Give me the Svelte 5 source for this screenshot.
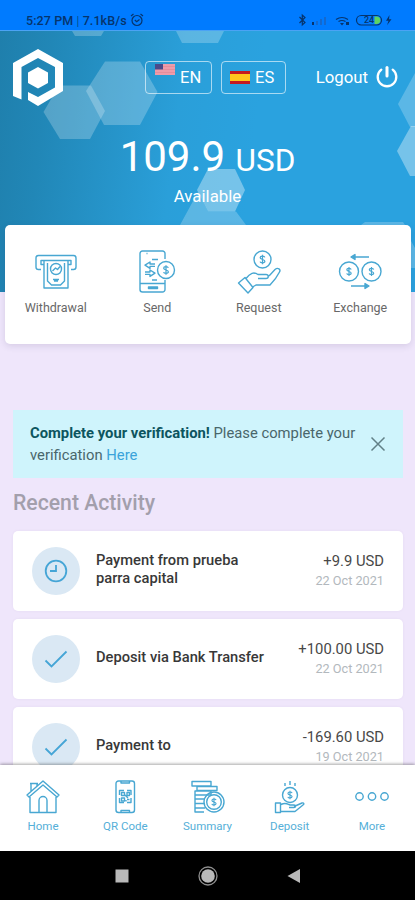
<svelte:options runes={true} />

<script>
	let showAlert = $state(true);
	let lang = $state('es');
	let tab = $state('home');

	const actions = [
		{ id: 'withdrawal', label: 'Withdrawal' },
		{ id: 'send', label: 'Send' },
		{ id: 'request', label: 'Request' },
		{ id: 'exchange', label: 'Exchange' }
	];

	const activity = [
		{ title: 'Payment from prueba parra capital', amount: '+9.9 USD', date: '22 Oct 2021', done: false },
		{ title: 'Deposit via Bank Transfer', amount: '+100.00 USD', date: '22 Oct 2021', done: true },
		{ title: 'Payment to', amount: '-169.60 USD', date: '19 Oct 2021', done: true }
	];

	const tabs = [
		{ id: 'home', label: 'Home' },
		{ id: 'qr', label: 'QR Code' },
		{ id: 'summary', label: 'Summary' },
		{ id: 'deposit', label: 'Deposit' },
		{ id: 'more', label: 'More' }
	];
</script>

{#snippet coin(cx, cy, r, s)}
	<circle {cx} {cy} {r} />
	<g transform="translate({cx} {cy}) scale({s})">
		<path d="M2.6 -2.4C2 -4.2 -2.6 -4.2 -2.6 -2C-2.6 .3 2.6 -.3 2.6 2C2.6 4.2 -2.2 4.2 -2.7 2.3M0 -5.2V5.2" />
	</g>
{/snippet}

<div class="phone">
	<div class="status">
		<span class="time">5:27 PM <i>|</i> 7.1kB/s</span>
		<svg class="alarm" width="14" height="14" viewBox="0 0 14 14">
			<circle cx="7" cy="7.5" r="5" />
			<path d="M1 3L3.5 1M13 3L10.500 1M4.800 7L6.700 8.800L9.500 6.500" />
		</svg>
		<svg class="signals" width="98" height="16" viewBox="0 0 98 16">
			<path class="line" d="M4.500 5L10 10.500L7.300 13V3L10 5.500L4.500 11" />
			<path d="M17 10h2v3h-2z" />
			<path class="dim" d="M21 9h2v4h-2zM25 7h2v6h-2zM29 5h2v8h-2z" />
			<path class="line" d="M41 7.500Q47 3.500 53 7.500M43.500 9.500Q47 7.500 50.500 9.500" />
			<path d="M45 11h4l-2 2.500zM51 10h3v3h-3z" />
			<rect class="line" x="61.500" y="3.500" width="25" height="9.500" rx="4.700" />
			<path class="charge" d="M79.500 4.500h2a3.700 3.700 0 0 1 0 7.500h-2z" />
			<text x="69" y="11.300">24</text>
			<path d="M94.500 3L91 8.700h2.500L92 13.200L96.500 7.200H94z" />
		</svg>
	</div>

	<main>
		<header class="hero">
			<svg class="hexes" width="415" height="261" viewBox="0 31 415 261">
				<path d="M43.500 112L59 85.500H91L105 111L90 139H60Z" />
				<path d="M86 91L105 61.500H140L157.500 92L140 125H104Z" />
				<path d="M72 31H104L101 36H75Z" />
				<path d="M176 31H224L218 43H182Z" />
				<path d="M398 104L415 73V127H410Z" />
				<path class="light" d="M397 151L411 126H415V176H410Z" />
				<path class="light" d="M197 190L208 169H235L245 190L235 211.500H208Z" />
				<path d="M180 225L198 192L208 211.500H236L246 225Z" />
				<path d="M361 225L365 222H403L405 225ZM411 241L415 248V268H411Z" />
			</svg>
			<div class="top">
				<svg class="logo" width="50" height="57" viewBox="0 0 50 57">
					<path d="M0 47V14L25 0L50 14V42L25 57L15 51V43L25 48L42 38.500V18L25 9L8.500 18V50.500Z" />
					<path d="M25 18L35 23.500V34L25 39.500L15 34V23.500Z" />
				</svg>
				<div class="langs">
					<button class="lang en" onclick={() => (lang = 'en')}>
						<svg width="20" height="11" viewBox="0 0 20 11">
							<rect width="20" height="11" fill="#ee9ba9" />
							<path d="M8 2.500h12M8 5.500h12M0 8.500h20" stroke="#e48e9c" stroke-width="1" />
							<rect width="8" height="5.500" fill="#4a4a8a" />
						</svg>
						EN
					</button>
					<button class="lang es" onclick={() => (lang = 'es')}>
						<svg width="20" height="13" viewBox="0 0 20 13">
							<rect width="20" height="13" fill="#c41a20" />
							<rect y="3" width="20" height="7" fill="#ffc61e" />
						</svg>
						ES
					</button>
				</div>
				<button class="logout">
					Logout
					<svg width="22" height="22" viewBox="0 0 22 22">
						<path d="M5.300 3.600A9.300 9.300 0 1 0 16.700 3.600" stroke-width="2.300" />
						<path d="M11 1.500V10" stroke-width="3" />
					</svg>
				</button>
			</div>
			<div class="balance">109.9 <small>USD</small></div>
			<div class="available">Available</div>
		</header>

		<section class="actions">
			{#each actions as action}
				<button class="action">
					<svg class="icon" width="46" height="46" viewBox="0 0 46 46">
						{#if action.id === 'withdrawal'}
							<path d="M8 20.500H5.500a2.500 2.500 0 0 1-2.500-2.500V9a2.500 2.500 0 0 1 2.500-2.500h35a2.500 2.500 0 0 1 2.500 2.500v9a2.500 2.500 0 0 1-2.500 2.500H38" />
							<path d="M10.500 15.500H8v-4h30v4h-2.500M11 12v27h24V12M14.500 14v18l4 4h9l4-4V14" />
							<circle cx="23" cy="20" r="5.500" />
							<path d="M19.500 22l3-3 2 1.500 2.500-3M20 30.500h6M21 32h4" />
						{:else if action.id === 'send'}
							<path d="M31 10V4.500a2.500 2.500 0 0 0-2.500-2.500h-20A2.500 2.500 0 0 0 6 4.500v36A2.500 2.500 0 0 0 8.500 43h20a2.500 2.500 0 0 0 2.500-2.500V31M6 34.500h25M12.500 4.500h1M14.500 38h9v1.500h-9zM18 10.500h6M18 31h5" />
							<path d="M21 15h-5v-2l-5 3.200 5 3.200v-2h5M11 23h5v-2l5 3.200-5 3.200v-2h-5" />
							{@render coin(32, 21, 8.5, 0.9)}
						{:else if action.id === 'request'}
							{@render coin(26.5, 10.500, 8.5, 0.9)}
							<path d="M2.500 34L9 28.500L17 38.500L12 44Z" />
							<path d="M10 29.500C14 24 18 22.500 22 25.500H30C33 25.500 33 29.500 30 29.500H22M33 27L39 20.500C42 18 45 20.500 43.500 23C41 28 36 34 34 36H20L16.500 38" />
						{:else}
							{@render coin(12, 22.500, 9.5, 0.85)}
							{@render coin(34.500, 22.500, 9.5, 0.85)}
							<path d="M16 8h16M14 37h16" />
							<path class="solid" d="M18 5.500v5L14 8zM28 34.500v5l4-2.500z" />
						{/if}
					</svg>
					<span>{action.label}</span>
				</button>
			{/each}
		</section>

		{#if showAlert}
			<div class="alert">
				<p><b>Complete your verification!</b> Please complete your verification <a href="#verify">Here</a></p>
				<button class="close" aria-label="Close" onclick={() => (showAlert = false)}>
					<svg width="16" height="16" viewBox="0 0 16 16">
						<path d="M1.500 1.500L14.500 14.500M14.500 1.500L1.500 14.500" />
					</svg>
				</button>
			</div>
		{/if}

		<h2>Recent Activity</h2>
		<div class="list">
			{#each activity as item}
				<article class="item">
					<div class="badge">
						<svg width="24" height="24" viewBox="0 0 24 24">
							{#if item.done}
								<path d="M1.500 13.500L7.500 19.500L22.500 4.500" />
							{:else}
								<circle cx="12" cy="12" r="10.300" />
								<path d="M12 6V12H6" />
							{/if}
						</svg>
					</div>
					<h3>{item.title}</h3>
					<div class="amount">
						<div class="sum">{item.amount}</div>
						<div class="date">{item.date}</div>
					</div>
				</article>
			{/each}
		</div>
	</main>

	<nav>
		{#each tabs as t}
			<button class="tab" class:active={tab === t.id} onclick={() => (tab = t.id)}>
				<svg class="icon" width="36" height="34" viewBox="0 0 36 34">
					{#if t.id === 'home'}
						<path d="M5 17v15.500h26V17M18 1L2 15l2 2L18 5l14 12 2-2zM6 11V3.500h6V6M5 3.500h8M14 32V20.500a4 4 0 0 1 8 0V32" />
					{:else if t.id === 'qr'}
						<rect x="9" y="1" width="18.500" height="31.500" rx="2.500" />
						<path d="M14 1v2h8.500V1M14 32.500v-2h8.500v2M12.500 15v-4.500H17M20 10.500h4V15M24 18v4.500h-4M17 22.500h-4.500V18" />
						<path d="M14.500 12.500h3v3h-3zM20 12.500h2.500v3H20zM14.500 18h3v3h-3zM18 15l3 3M20 19.500h2.500M19 20v1.500" />
					{:else if t.id === 'summary'}
						<path d="M3 1.500h19V6H3zM8 6.500h20v4H8zM6 11h16v4H6zM15 32H6V15M6 19h10M6 23.500h9M6 28h10" />
						<circle cx="25" cy="22" r="10" />
						{@render coin(25, 22, 7.3, 0.8)}
					{:else if t.id === 'deposit'}
						{@render coin(18, 15, 7.5, 0.8)}
						<path d="M18 1v4M13 3v3M23 3v3M3.500 23h5v9.500h-5zM9 24.500c5-2.500 7 0 9 .5h4c2 0 2 2.500 0 2.500h-5M22 26.500l8-3.500c2-.5 2.500 1 1 2l-8 6.500H9" />
					{:else}
						<circle cx="5.500" cy="16.500" r="3.700" />
						<circle cx="18" cy="16.500" r="3.700" />
						<circle cx="30.500" cy="16.500" r="3.700" />
					{/if}
				</svg>
				<span>{t.label}</span>
			</button>
		{/each}
	</nav>

	<div class="system">
		<svg width="14" height="14" viewBox="0 0 14 14"><rect x=".5" y=".5" width="13" height="13" /></svg>
		<svg width="20" height="20" viewBox="0 0 20 20">
			<circle cx="10" cy="10" r="6.800" />
			<circle class="ring" cx="10" cy="10" r="9" />
		</svg>
		<svg width="14" height="14" viewBox="0 0 14 14"><path d="M13 0V14L.5 7Z" /></svg>
	</div>
</div>

<style>
	:global(body) {
		margin: 0;
		background: #efe6fb;
	}
	.phone {
		width: 415px;
		height: 900px;
		display: flex;
		flex-direction: column;
		overflow: hidden;
		font-family: Roboto, sans-serif;
		background: #efe6fb;
	}
	button {
		font: inherit;
		color: inherit;
		background: none;
		border: 0;
		padding: 0;
	}
	svg {
		display: block;
		flex: none;
	}
	.status {
		height: 31px;
		flex: none;
		box-sizing: border-box;
		padding: 10px 22px 0 26px;
		display: flex;
		align-items: center;
		background: #007bff;
		color: #06346c;
		border-bottom: 1px solid #4ba3f5;
	}
	.time {
		font-size: 12.5px;
		font-weight: 500;
		letter-spacing: 0.1px;
		white-space: nowrap;
	}
	.time i {
		font-style: normal;
		font-weight: 300;
	}
	.alarm {
		margin-left: 3px;
		fill: none;
		stroke: #06346c;
		stroke-width: 1.2;
	}
	.signals {
		margin-left: auto;
		fill: #06346c;
	}
	.signals .line {
		fill: none;
		stroke: #06346c;
		stroke-width: 1.2;
	}
	.signals .dim {
		fill: #1369cf;
	}
	.signals .charge {
		fill: #5fd35f;
	}
	.signals text {
		font-size: 9px;
		font-weight: 500;
	}
	main {
		flex: 1;
		min-height: 0;
		overflow: hidden;
	}
	.hero {
		position: relative;
		height: 261px;
		color: #fff;
		background: linear-gradient(97deg, #1f7fac 0%, #2187b7 12%, #2a9fd9 42%, #2aa2df 60%, #2aa2df 100%);
	}
	.hexes {
		position: absolute;
		top: 0;
		left: 0;
		fill: rgba(255, 255, 255, 0.23);
	}
	.hexes .light {
		fill: rgba(255, 255, 255, 0.36);
	}
	.top {
		position: relative;
		display: flex;
		align-items: center;
		height: 58px;
		padding: 17px 17px 0 13px;
	}
	.logo {
		fill: #fff;
	}
	.langs {
		display: flex;
		gap: 9px;
		margin-left: 82px;
	}
	.lang {
		display: flex;
		align-items: center;
		box-sizing: border-box;
		height: 33px;
		gap: 5px;
		padding: 0 9px;
		border: 1px solid rgba(255, 255, 255, 0.6);
		border-radius: 4px;
		font-size: 16.5px;
	}
	.en {
		width: 67px;
	}
	.en svg {
		margin-bottom: 16px;
	}
	.es {
		width: 65px;
	}
	.es svg {
		margin-left: -1px;
	}
	.logout {
		display: flex;
		align-items: center;
		gap: 8px;
		margin-left: auto;
		font-size: 16.8px;
	}
	.logout svg {
		fill: none;
		stroke: #fff;
		stroke-linecap: round;
	}
	.balance {
		position: relative;
		margin-top: 26px;
		height: 50px;
		line-height: 50px;
		text-align: center;
		font-size: 42px;
	}
	.balance small {
		font-size: 31.5px;
	}
	.available {
		position: relative;
		margin-top: 2px;
		line-height: 24px;
		text-align: center;
		font-size: 16.8px;
	}
	.actions {
		position: relative;
		display: grid;
		grid-template-columns: repeat(4, 1fr);
		height: 119px;
		margin: -67px 4px 66px 5px;
		background: #fff;
		border-radius: 5px;
		box-shadow: 0 2px 7px rgba(60, 40, 90, 0.14);
	}
	.action {
		display: flex;
		flex-direction: column;
		align-items: center;
		padding-top: 24px;
		font-size: 12.5px;
		color: #686868;
	}
	.action span {
		margin-top: 5px;
		line-height: 16px;
	}
	.icon {
		fill: none;
		stroke: #48a7d2;
		stroke-width: 1.4;
		stroke-linejoin: round;
	}
	.icon .solid {
		fill: #48a7d2;
	}
	.alert {
		display: flex;
		align-items: center;
		box-sizing: border-box;
		height: 68px;
		margin: 0 12px 0 13px;
		padding: 0 17px;
		background: #cff4fc;
		color: #49666b;
	}
	.alert p {
		flex: 1;
		margin: 0;
		font-size: 14.8px;
		line-height: 22px;
	}
	.alert b {
		font-weight: 700;
		color: #0c555f;
	}
	.alert a {
		color: #3aa3da;
		text-decoration: none;
	}
	.close svg {
		fill: none;
		stroke: #628087;
		stroke-width: 1.5;
	}
	h2 {
		margin: 11px 13px 14px;
		font-size: 21.2px;
		line-height: 28px;
		font-weight: 500;
		color: #a39fac;
	}
	.list {
		display: flex;
		flex-direction: column;
		gap: 8px;
		margin: 0 12px 0 13px;
	}
	.item {
		display: flex;
		align-items: center;
		box-sizing: border-box;
		height: 80px;
		padding: 0 19px;
		background: #fff;
		border-radius: 5px;
		box-shadow: 0 0 3px rgba(80, 50, 120, 0.06);
	}
	.badge {
		display: flex;
		align-items: center;
		justify-content: center;
		width: 48px;
		height: 48px;
		flex: none;
		border-radius: 50%;
		background: #dae8f4;
	}
	.badge svg {
		fill: none;
		stroke: #45a5d6;
		stroke-width: 1.8;
	}
	h3 {
		width: 180px;
		margin: 0 0 4px 16px;
		font-size: 14.7px;
		line-height: 18px;
		font-weight: 500;
		color: #383838;
	}
	.amount {
		margin-left: auto;
		text-align: right;
		white-space: nowrap;
	}
	.sum {
		font-size: 14.8px;
		line-height: 20px;
		color: #484848;
	}
	.date {
		font-size: 12.7px;
		line-height: 20px;
		color: #b2b8bd;
	}
	nav {
		position: relative;
		display: grid;
		grid-template-columns: repeat(5, 1fr);
		height: 86px;
		flex: none;
		padding: 0 2px;
		background: #fff;
		box-shadow: 0 -1px 3px rgba(0, 0, 0, 0.35);
	}
	.tab {
		display: flex;
		flex-direction: column;
		align-items: center;
		padding-top: 15px;
		font-size: 11.5px;
		color: #55afd8;
	}
	.tab span {
		margin-top: 5px;
		line-height: 14px;
	}
	.system {
		display: flex;
		align-items: center;
		justify-content: center;
		gap: 69px;
		height: 49px;
		flex: none;
		background: #000;
		fill: #b9b9b9;
	}
	.ring {
		fill: none;
		stroke: #8f8f8f;
		stroke-width: 1.3;
	}
</style>
